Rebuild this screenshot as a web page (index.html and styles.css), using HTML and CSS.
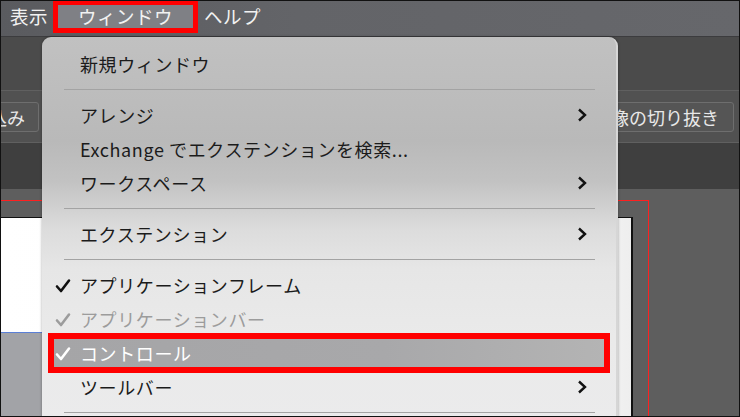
FILE: index.html
```html
<!DOCTYPE html>
<html lang="ja">
<head>
<meta charset="utf-8">
<title>ウィンドウ メニュー</title>
<link rel="stylesheet" href="styles.css">
</head>
<body>
<div class="screen">
  <div class="menubar">
    <div class="mb-item">表示</div>
    <div class="mb-item mb-active">ウィンドウ</div>
    <div class="mb-item">ヘルプ</div>
  </div>
  <div class="app">
    <div class="toolbar"></div>
    <div class="controlbar">
      <div class="cbtn cbtn-left">読み込み</div>
      <div class="cbtn cbtn-right">画像の切り抜き</div>
    </div>
    <div class="tabbar"></div>
    <div class="canvas">
      <div class="artboard">
        <div class="page">
          <div class="panel"></div>
        </div>
      </div>
    </div>
  </div>

  <div class="menu">
    <div class="mi">新規ウィンドウ</div>
    <div class="sep"></div>
    <div class="mi">アレンジ<svg class="chev" viewBox="0 0 10 14"><polyline points="2,1.5 8,7 2,12.5"/></svg></div>
    <div class="mi">Exchange でエクステンションを検索...</div>
    <div class="mi">ワークスペース<svg class="chev" viewBox="0 0 10 14"><polyline points="2,1.5 8,7 2,12.5"/></svg></div>
    <div class="sep"></div>
    <div class="mi">エクステンション<svg class="chev" viewBox="0 0 10 14"><polyline points="2,1.5 8,7 2,12.5"/></svg></div>
    <div class="sep"></div>
    <div class="mi"><svg class="check" viewBox="0 0 16 16"><polyline points="2,8.5 6,13 14,2.5"/></svg>アプリケーションフレーム</div>
    <div class="mi mi-disabled"><svg class="check" viewBox="0 0 16 16"><polyline points="2,8.5 6,13 14,2.5"/></svg>アプリケーションバー</div>
    <div class="mi mi-hl"><svg class="check" viewBox="0 0 16 16"><polyline points="2,8.5 6,13 14,2.5"/></svg>コントロール</div>
    <div class="mi">ツールバー<svg class="chev" viewBox="0 0 10 14"><polyline points="2,1.5 8,7 2,12.5"/></svg></div>
    <div class="sep"></div>
  </div>
</div>
</body>
</html>
```
FILE: styles.css
```css
* { box-sizing: border-box; }
html, body { margin: 0; padding: 0; }
body {
  font-family: "Noto Sans CJK JP", "Noto Sans", sans-serif;
  background: #000;
}
.screen {
  position: relative;
  width: 740px;
  height: 417px;
  overflow: hidden;
  background: #5c5c5c;
  display: flex;
  flex-direction: column;
}
.screen::after {
  content: "";
  position: absolute;
  inset: 0;
  border: 1px solid #111;
  pointer-events: none;
}

/* menubar */
.menubar {
  height: 37px;
  flex: none;
  display: flex;
  align-items: center;
  gap: 8px;
  padding: 0 0 3px 10px;
  background: linear-gradient(90deg, #5a5b5f 0%, #636468 40%, #66676b 100%);
  border-bottom: 1px solid #3c3c3e;
}
.mb-item {
  font-size: 18.5px;
  line-height: 27px;
  height: 27px;
  color: #f2f2f2;
  letter-spacing: 0.5px;
}
.mb-active {
  position: relative;
  padding: 0 22px 0 22px;
  margin-right: 1px;
  background: #7f8085;
}
.mb-active::after {
  content: "";
  position: absolute;
  inset: -3px -3px -3px -3px;
  border: 5px solid #ff0000;
}

/* application background */
.app {
  flex: 1;
  display: flex;
  flex-direction: column;
}
.toolbar {
  height: 54px;
  background: #4b4b4b;
  border-bottom: 1px solid #606060;
}
.controlbar {
  height: 52px;
  background: #515151;
  border-bottom: 1px solid #606060;
  display: flex;
  justify-content: space-between;
  align-items: center;
  padding: 0 6px 0 0;
}
.cbtn {
  height: 30px;
  line-height: 28px;
  font-size: 18px;
  color: #e8e8e8;
  border: 1px solid #6e6e6e;
  border-radius: 3px;
  background: #555;
  white-space: nowrap;
}
.cbtn-left {
  margin-left: -58px;
  padding: 0 13px 0 10px;
}
.cbtn-right {
  padding: 0 14px 0 12px;
}
.tabbar {
  height: 46px;
  background: #3f3f3f;
}
.canvas {
  flex: 1;
  background: #5e5e5e;
  padding-top: 11px;
}
.artboard {
  width: 649px;
  height: 240px;
  border-top: 1px solid #ff2020;
  border-right: 1px solid #ff2020;
  padding-top: 16px;
}
.page {
  width: 633px;
  height: 220px;
  background: linear-gradient(90deg, #ffffff 0%, #fafafa 90%, #eeeeee 100%);
  border-top: 1px solid #111;
  border-right: 2px solid #111;
  padding-top: 114px;
}
.panel {
  width: 60px;
  height: 100px;
  background: #a2a3a7;
  border-top: 1px solid #5a7fd6;
}

/* dropdown menu (overlay) */
.menu {
  position: absolute;
  left: 42px;
  top: 37px;
  width: 576px;
  height: 400px;
  padding-top: 10px;
  border-radius: 9px 9px 0 0;
  background: linear-gradient(180deg, #c1c1c1 0%, #b9b9b9 26%, #c2c2c2 36%, #dcdcdc 48%, #e6e6e6 58%, #eaeaea 75%, #ebebec 100%);
  border-right: 2px solid #d6d6d6;
  box-shadow: 0 0 3px rgba(0,0,0,0.35);
}
.mi {
  position: relative;
  height: 34px;
  margin: 0 9px;
  padding-left: 29px;
  display: flex;
  align-items: center;
  font-size: 18px;
  color: #1b1b1b;
  letter-spacing: 0.6px;
  white-space: nowrap;
}
.sep {
  height: 1px;
  margin: 8px 21px 8px 22px;
  background: #a3a3a3;
}
.chev {
  position: absolute;
  right: 20px;
  top: 10px;
  width: 10px;
  height: 14px;
  fill: none;
  stroke: #111;
  stroke-width: 2.4;
}
.check {
  position: absolute;
  left: 4px;
  top: 10px;
  width: 16px;
  height: 16px;
  fill: none;
  stroke: #111;
  stroke-width: 2.6;
  stroke-linecap: round;
  stroke-linejoin: round;
}
.mi-disabled { color: #9c9c9c; }
.mi-disabled .check { stroke: #9c9c9c; }
.mi-hl {
  color: #ffffff;
  background: linear-gradient(90deg, #a5a5a7 0%, #a8a8aa 60%, #b4b4b4 100%);
}
.mi-hl .check { stroke: #ffffff; }
.mi-hl::after {
  content: "";
  position: absolute;
  inset: -3px;
  border: 6px solid #ff0000;
}
```
